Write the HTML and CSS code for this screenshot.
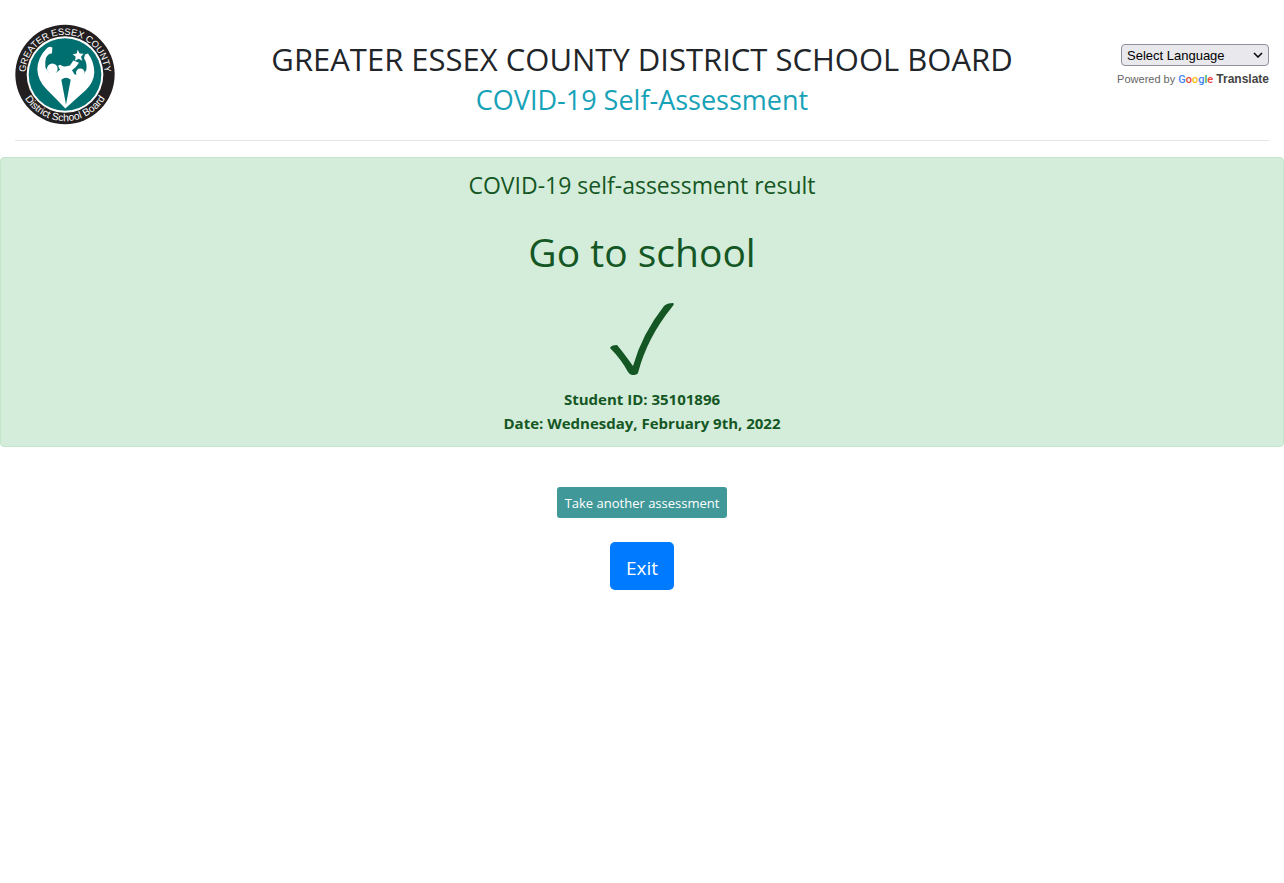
FILE: index.html
```html
<!DOCTYPE html>
<html lang="en">
<head>
<meta charset="utf-8">
<meta name="viewport" content="width=device-width, initial-scale=1">
<title>COVID-19 Self-Assessment</title>
<link rel="stylesheet" href="styles.css">
</head>
<body>
<header class="header">
  <svg class="logo" viewBox="15 14 300 300" role="img" aria-label="Greater Essex County District School Board">
    <defs>
      <path id="arc-top" d="M 46 164 A 119 119 0 0 1 284 164"/>
      <path id="arc-bottom" d="M 25 164 A 140 140 0 0 0 305 164"/>
    </defs>
    <circle cx="165" cy="164" r="149" fill="#231f20"/>
    <circle cx="165" cy="164" r="115" fill="#fff"/>
    <circle cx="165" cy="164" r="109" fill="#006f6f"/>
    <text class="logo-text"><textPath href="#arc-top" startOffset="50%">GREATER ESSEX COUNTY</textPath></text>
    <text class="logo-text logo-text-lower"><textPath href="#arc-bottom" startOffset="50%">District School Board</textPath></text>
    <g fill="#fff">
      <path d="M110 86 Q118 77 127 83 L126 100 Q114 101 108 114 Q105 124 106 142 L116 158 L139 158 L150 150 L144 138 L151 135 Q160 143 169 139 L180 137 L190 122 L207 129 Q200 141 186 151 L194 164 L220 166 L229 150 Q232 129 222 115 L225 104 L234 101 Q252 125 253 157 Q252 187 227 211 Q191 243 166 266 Q141 240 111 210 Q83 182 82 149 Q83 112 110 86 Z"/>
      <circle cx="127" cy="147" r="16"/>
      <circle cx="211" cy="159" r="13"/>
      <path d="M203 90 L209 101 L221 102 L213 111 L217 123 L206 117 L195 123 L197 111 L188 103 L200 101 Z"/>
    </g>
    <path d="M154 180 Q168 168 182 180 L168 255 Z" fill="#006f6f"/>
  </svg>
  <div class="titles">
    <h1 class="board">GREATER ESSEX COUNTY DISTRICT SCHOOL BOARD</h1>
    <h2 class="subtitle">COVID-19 Self-Assessment</h2>
  </div>
  <div class="translate">
    <select class="language" aria-label="Select Language"><option>Select Language</option></select>
    <div class="powered">Powered by <span class="google"><span class="blue">G</span><span class="red">o</span><span class="yellow">o</span><span class="blue">g</span><span class="green">l</span><span class="red">e</span></span> <a class="translate-link" href="#">Translate</a></div>
  </div>
</header>
<main>
  <section class="result">
    <h3 class="result-title">COVID-19 self-assessment result</h3>
    <p class="verdict">Go to school</p>
    <svg class="check" viewBox="0 0 64 72" aria-hidden="true"><path fill="#155724" d="M0 45 Q1 42 7 42 Q13 49 23 63 Q32 31 54 3 Q57 0 63 0 Q65 1 62 4 Q37 35 28 70 Q27 72 22 72 Q20 72 18 69 Q11 56 0 45 Z"/></svg>
    <p class="detail">Student ID: 35101896</p>
    <p class="detail">Date: Wednesday, February 9th, 2022</p>
  </section>
  <div class="actions">
    <button class="button again" type="button">Take another assessment</button>
    <button class="button exit" type="button">Exit</button>
  </div>
</main>
</body>
</html>
```
FILE: styles.css
```css
* { box-sizing: border-box; }
body {
  margin: 0;
  background: #fff;
  color: #212529;
  font-family: "Segoe UI", "Open Sans", "Noto Sans", sans-serif;
  font-size: 16px;
  line-height: 24px;
}
h1, h2, h3, p { margin: 0; font-weight: 400; }
.header {
  display: grid;
  grid-template-columns: 160px 1fr 160px;
  align-items: start;
  margin: 0 15px 16px;
  padding: 24px 0 15px;
  border-bottom: 1px solid #e5e5e5;
}
.logo { display: block; width: 100px; height: 101px; }
.logo-text {
  fill: #fff;
  font-family: "Liberation Sans", sans-serif;
  font-size: 28px;
  text-anchor: middle;
}
.logo-text-lower { font-size: 31px; }
.titles { padding-top: 16px; text-align: center; }
.board { font-size: 31px; line-height: 38px; white-space: nowrap; }
.subtitle { color: #17a2b8; font-size: 27px; line-height: 44px; }
.translate {
  padding-top: 20px;
  color: #666;
  font-family: "Liberation Sans", sans-serif;
  font-size: 11px;
  text-align: right;
  white-space: nowrap;
}
.language {
  appearance: none;
  display: block;
  width: 148px;
  height: 22px;
  margin-left: auto;
  padding: 0 5px;
  border: 1px solid #8f8f9d;
  border-radius: 4px;
  background: #e9e9ed url("data:image/svg+xml,%3Csvg xmlns='http://www.w3.org/2000/svg' width='10' height='6'%3E%3Cpath d='M1 1l4 4 4-4' fill='none' stroke='black' stroke-width='1.5'/%3E%3C/svg%3E") no-repeat right 5px center;
  color: #000;
  font-family: "Liberation Sans", sans-serif;
  font-size: 13px;
}
.powered { padding-top: 1px; }
.google { font-family: Roboto, sans-serif; font-weight: 500; }
.blue { color: #4285f4; }
.red { color: #ea4335; }
.yellow { color: #fbbc05; }
.green { color: #34a853; }
.translate-link { color: #444; font-size: 12px; font-weight: 700; text-decoration: none; }
.result {
  display: flex;
  flex-direction: column;
  align-items: center;
  padding: 11px 20px;
  border: 1px solid #c3e6cb;
  border-radius: 4px;
  background: #d4edda;
  color: #155724;
  text-align: center;
}
.result-title { font-size: 23px; line-height: 32px; }
.verdict { margin-top: 25px; font-size: 39px; line-height: 52px; }
.check { width: 64px; height: 72px; margin: 25px 0 12px; }
.detail { font-size: 15px; font-weight: 700; }
.actions {
  display: flex;
  flex-direction: column;
  align-items: center;
  gap: 24px;
  margin-top: 40px;
}
.button { border: 0; color: #fff; font-family: inherit; cursor: pointer; }
.again {
  padding: 6px 8px 4px;
  border-radius: 3px;
  background: #419899;
  font-size: 13px;
  line-height: 21px;
}
.exit {
  padding: 11px 16px 7px;
  border-radius: 5px;
  background: #007bff;
  font-size: 19px;
  line-height: 30px;
}
```
